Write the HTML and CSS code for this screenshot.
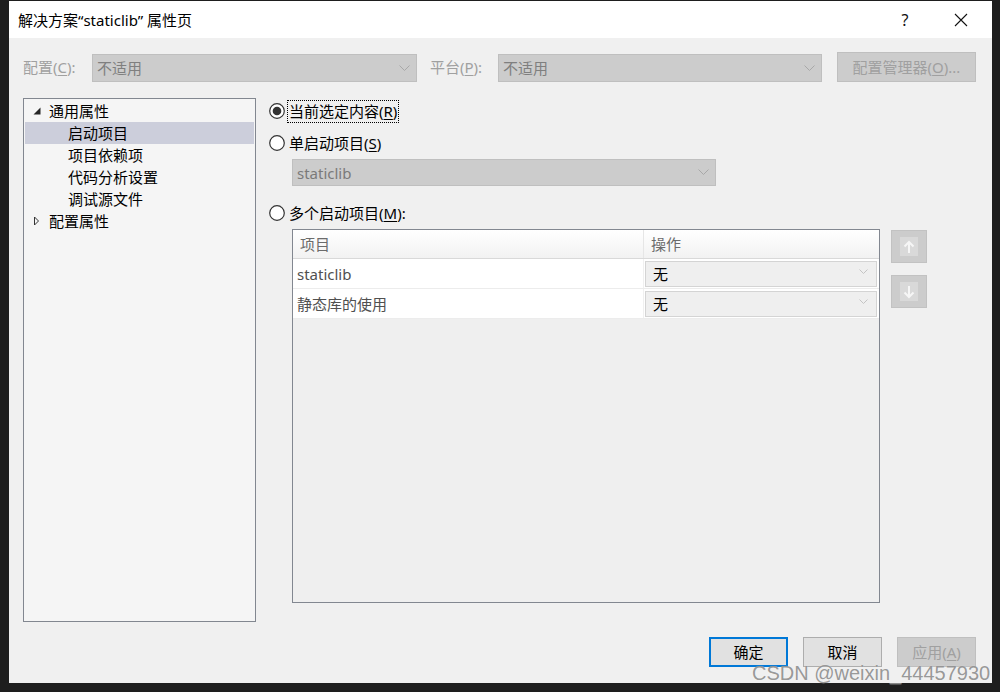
FILE: index.html
```html
<!DOCTYPE html>
<html lang="zh">
<head>
<meta charset="utf-8">
<title>解决方案“staticlib” 属性页</title>
<link rel="stylesheet" href="styles.css">
</head>
<body>
<div class="screen">
  <div class="dialog">
    <div class="titlebar">
      <span class="title">解决方案“staticlib” 属性页</span>
      <span class="help">?</span>
      <span class="close"><svg width="14" height="14" viewBox="0 0 14 14"><path d="M1 1L13 13M13 1L1 13" stroke="#111" stroke-width="1.1" fill="none"/></svg></span>
    </div>
    <div class="body">
      <div class="config-row">
        <span class="label lbl-config">配置(<u>C</u>):</span>
        <div class="combo combo-config"><span class="combo-text">不适用</span><svg class="chev" width="11" height="7" viewBox="0 0 11 7"><path d="M0.5 0.5L5.5 5.5L10.5 0.5" stroke="#a8a8a8" fill="none"/></svg></div>
        <span class="label lbl-platform">平台(<u>P</u>):</span>
        <div class="combo combo-platform"><span class="combo-text">不适用</span><svg class="chev" width="11" height="7" viewBox="0 0 11 7"><path d="M0.5 0.5L5.5 5.5L10.5 0.5" stroke="#a8a8a8" fill="none"/></svg></div>
        <div class="btn btn-disabled btn-manager">配置管理器(<u>O</u>)...</div>
      </div>
      <div class="main">
        <div class="tree">
          <div class="tree-row top"><svg class="exp" width="8" height="8" viewBox="0 0 8 8"><path d="M7.5 0.5V7.5H0.5Z" fill="#262626"/></svg><span>通用属性</span></div>
          <div class="tree-row child selected"><span>启动项目</span></div>
          <div class="tree-row child"><span>项目依赖项</span></div>
          <div class="tree-row child"><span>代码分析设置</span></div>
          <div class="tree-row child"><span>调试源文件</span></div>
          <div class="tree-row top"><svg class="exp" width="8" height="10" viewBox="0 0 8 10"><path d="M1.5 1L5.5 5L1.5 9Z" fill="none" stroke="#333" stroke-width="1"/></svg><span>配置属性</span></div>
        </div>
        <div class="pane">
          <div class="radio-row r1">
            <svg class="radio" width="16" height="16" viewBox="0 0 16 16"><circle cx="8" cy="8" r="7.3" fill="#fff" stroke="#333" stroke-width="1.2"/><circle cx="8" cy="8" r="4.3" fill="#333"/></svg>
            <span class="radio-label focus">当前选定内容(<u>R</u>)</span>
          </div>
          <div class="radio-row r2">
            <svg class="radio" width="16" height="16" viewBox="0 0 16 16"><circle cx="8" cy="8" r="7.3" fill="#fff" stroke="#333" stroke-width="1.2"/></svg>
            <span class="radio-label">单启动项目(<u>S</u>)</span>
          </div>
          <div class="combo combo-start"><span class="combo-text">staticlib</span><svg class="chev" width="11" height="7" viewBox="0 0 11 7"><path d="M0.5 0.5L5.5 5.5L10.5 0.5" stroke="#a8a8a8" fill="none"/></svg></div>
          <div class="radio-row r3">
            <svg class="radio" width="16" height="16" viewBox="0 0 16 16"><circle cx="8" cy="8" r="7.3" fill="#fff" stroke="#333" stroke-width="1.2"/></svg>
            <span class="radio-label">多个启动项目(<u>M</u>):</span>
          </div>
          <div class="grid-wrap">
            <div class="grid">
              <div class="grid-head">
                <div class="cell c1">项目</div>
                <div class="cell c2">操作</div>
              </div>
              <div class="grid-row">
                <div class="cell c1">staticlib</div>
                <div class="cell c2"><div class="cell-combo"><span>无</span><svg width="9" height="5" viewBox="0 0 9 5"><path d="M0.5 0.5L4.5 4.5L8.5 0.5" stroke="#c4c4c4" fill="none"/></svg></div></div>
              </div>
              <div class="grid-row">
                <div class="cell c1">静态库的使用</div>
                <div class="cell c2"><div class="cell-combo"><span>无</span><svg width="9" height="5" viewBox="0 0 9 5"><path d="M0.5 0.5L4.5 4.5L8.5 0.5" stroke="#c4c4c4" fill="none"/></svg></div></div>
              </div>
            </div>
            <div class="movers">
              <div class="mover"><span class="mover-in"><svg width="12" height="14" viewBox="0 0 12 14"><path d="M6 13V2M1.5 6.5L6 2L10.5 6.5" stroke="#f6f6f6" stroke-width="2" fill="none"/></svg></span></div>
              <div class="mover down"><span class="mover-in"><svg width="12" height="14" viewBox="0 0 12 14"><path d="M6 1V12M1.5 7.5L6 12L10.5 7.5" stroke="#f6f6f6" stroke-width="2" fill="none"/></svg></span></div>
            </div>
          </div>
        </div>
      </div>
      <div class="footer">
        <div class="btn btn-ok">确定</div>
        <div class="btn btn-cancel">取消</div>
        <div class="btn btn-disabled btn-apply">应用(<u>A</u>)</div>
      </div>
    </div>
  </div>
  <div class="watermark">CSDN @weixin_44457930</div>
</div>
</body>
</html>
```
FILE: styles.css
```css
* { box-sizing: border-box; }
html, body { margin: 0; padding: 0; }
body {
  background: #1e1e1e;
  font-family: "Noto Sans", "Noto Sans CJK SC", sans-serif;
  font-size: 15px;
  color: #000;
}
u { text-decoration: underline; text-underline-offset: 2px; text-decoration-thickness: 1px; }
.screen {
  position: relative;
  width: 1000px;
  height: 692px;
  overflow: hidden;
  padding: 1px 0 0 9px;
}
.dialog {
  width: 983px;
  height: 682px;
  background: #f0f0f0;
  display: flex;
  flex-direction: column;
}
.titlebar {
  height: 37px;
  flex-shrink: 0;
  background: #fff;
  display: flex;
  align-items: center;
  padding-left: 9px;
}
.title { flex: 1; line-height: 20px; color: #000; }
.help {
  width: 20px;
  text-align: center;
  font-size: 16px;
  line-height: 20px;
  margin-right: 39px;
  color: #111;
}
.close { width: 14px; height: 14px; margin-right: 24px; display: flex; }
.body {
  flex: 1;
  padding: 14px 16px 16px 14px;
  display: flex;
  flex-direction: column;
  min-height: 0;
}
.config-row {
  height: 30px;
  display: flex;
  align-items: center;
  flex-shrink: 0;
}
.label { color: #a0a0a0; line-height: 20px; }
.lbl-config { width: 69px; }
.lbl-platform { width: 68px; margin-left: 13px; }
.combo {
  height: 28px;
  background: #cccccc;
  border: 1px solid #bfbfbf;
  display: flex;
  align-items: center;
  padding: 0 6px 0 4px;
  color: #7f7f7f;
  line-height: 20px;
}
.combo-text { flex: 1; }
.combo-config { width: 325px; align-self: flex-end; }
.combo-platform { width: 324px; align-self: flex-end; }
.btn {
  display: flex;
  align-items: center;
  justify-content: center;
  height: 30px;
  line-height: 20px;
  border: 1px solid #adadad;
  background: #e1e1e1;
  color: #000;
}
.btn-disabled { background: #cccccc; border-color: #bfbfbf; color: #a0a0a0; }
.btn-manager { width: 139px; margin-left: 15px; }
.main {
  flex: 1;
  margin-top: 16px;
  display: flex;
  min-height: 0;
}
.tree {
  width: 233px;
  border: 1px solid #828790;
  background: #f5f5f5;
  padding-top: 1px;
}
.tree-row {
  height: 22px;
  margin: 0 1px;
  display: flex;
  align-items: center;
  line-height: 20px;
  color: #000;
}
.tree-row.top { padding-left: 8px; }
.tree-row.top .exp { width: 8px; margin-right: 8px; flex-shrink: 0; }
.tree-row.child { padding-left: 43px; }
.tree-row.selected { background: #cccedb; }
.pane {
  flex: 1;
  margin-left: 13px;
  display: flex;
  flex-direction: column;
}
.radio-row {
  height: 22px;
  display: flex;
  align-items: center;
  line-height: 20px;
}
.radio { flex-shrink: 0; }
.radio-label { margin-left: 3px; padding: 0 1px; }
.focus { outline: 1px dotted #000; outline-offset: 0; line-height: 21px; }
.r1 { margin-top: 2px; }
.r2 { margin-top: 10px; }
.combo-start {
  margin: 5px 0 0 23px;
  width: 424px;
  height: 27px;
  color: #7a7a7a;
}
.r3 { margin-top: 16px; }
.grid-wrap {
  margin: 5px 0 0 23px;
  display: flex;
  height: 374px;
}
.grid {
  width: 588px;
  border: 1px solid #828790;
  background: #efefef;
}
.grid-head {
  height: 29px;
  display: flex;
  background: linear-gradient(#ffffff, #f2f2f2);
  border-bottom: 1px solid #d9d9d9;
  color: #6b6b6b;
}
.cell { display: flex; align-items: center; line-height: 20px; }
.grid-head .c1 { width: 351px; padding-left: 7px; border-right: 1px solid #e6e6e6; }
.grid-head .c2 { flex: 1; padding-left: 7px; }
.grid-row {
  height: 30px;
  display: flex;
  background: #fff;
  border-bottom: 1px solid #ececec;
}
.grid-row .c1 { width: 351px; padding-left: 4px; color: #505050; border-right: 1px solid #f0f0f0; }
.grid-row .c2 { flex: 1; padding: 2px 2px 1px 1px; align-items: stretch; }
.cell-combo {
  flex: 1;
  display: flex;
  align-items: center;
  justify-content: space-between;
  background: #efefef;
  border: 1px solid #d4d4d4;
  padding: 0 8px 1px 7px;
  color: #000;
}
.cell-combo svg { margin-top: -4px; }
.movers {
  margin-left: 11px;
  display: flex;
  flex-direction: column;
}
.mover {
  width: 36px;
  height: 33px;
  margin-top: 1px;
  background: #cccccc;
  border: 1px solid #c2c2c2;
  display: flex;
  align-items: center;
  justify-content: center;
}
.mover.down { margin-top: 12px; }
.mover-in {
  width: 18px;
  height: 19px;
  background: #d9d9d9;
  display: flex;
  align-items: center;
  justify-content: center;
}
.footer {
  margin-top: 15px;
  height: 30px;
  flex-shrink: 0;
  display: flex;
  justify-content: flex-end;
  gap: 15px;
}
.footer .btn { width: 79px; }
.btn-ok { border: 2px solid #0078d7; }
.watermark {
  position: absolute;
  left: 752px;
  top: 661px;
  font-family: "Liberation Sans", Arial, sans-serif;
  font-size: 20px;
  line-height: 24px;
  color: rgba(140, 140, 140, 0.9);
  text-shadow: 0 0 1px rgba(255, 255, 255, 0.5);
  white-space: nowrap;
}
```
